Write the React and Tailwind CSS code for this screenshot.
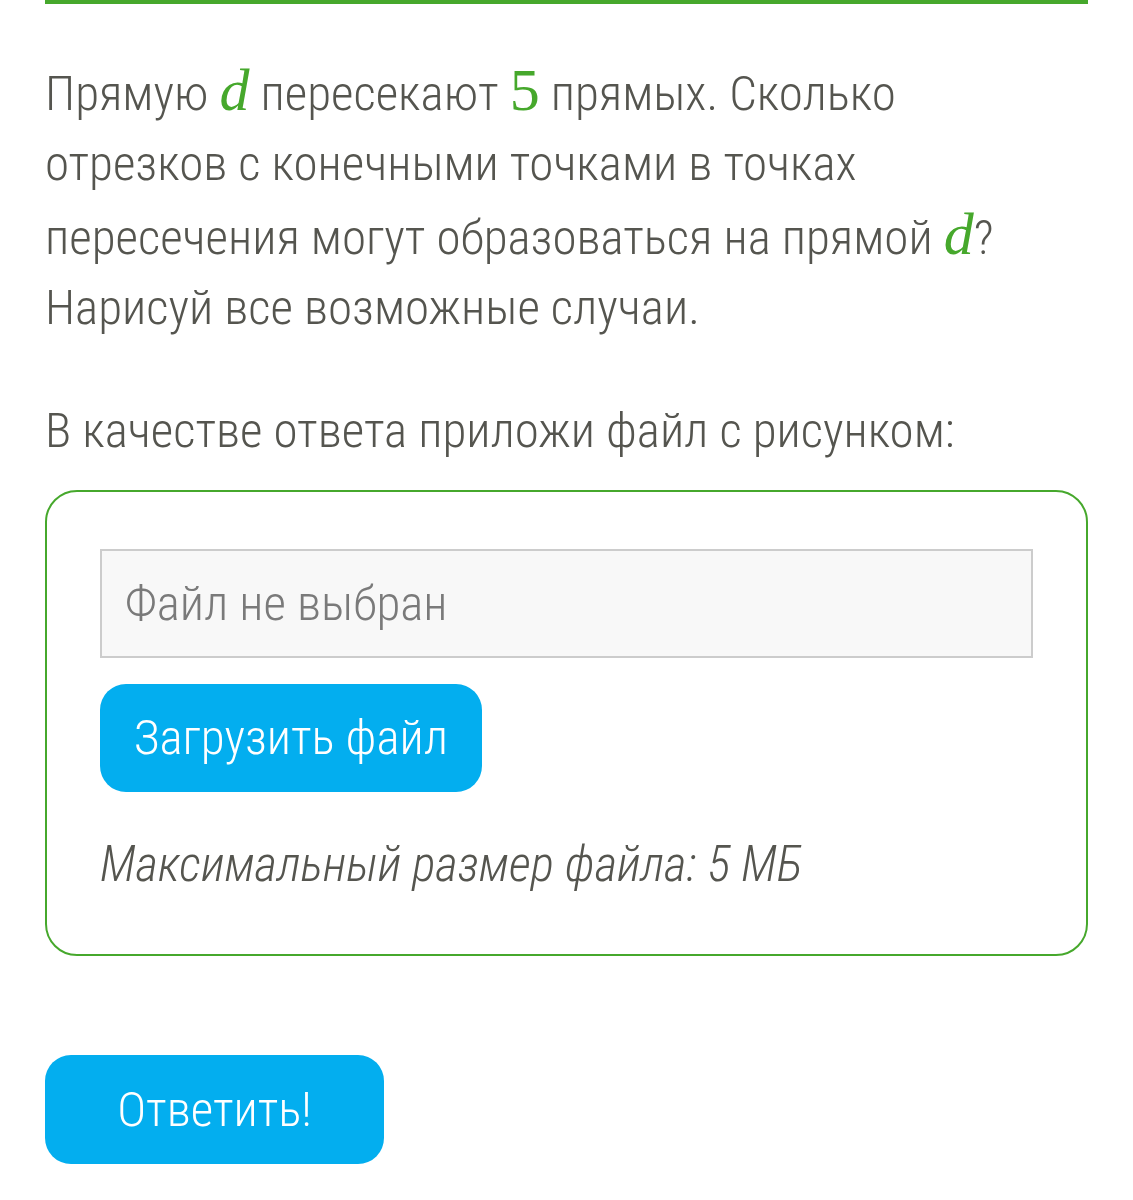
export default function App() {
  const font = { fontFamily: '"Roboto Condensed", Roboto, "Liberation Sans", sans-serif' }
  return (
    <div className="min-h-[1200px] bg-white text-[#55554f]" style={font}>
      <div className="px-[45px]">
        {/* top rule */}
        <div className="h-[4px] bg-[#46a82c]" />

        <p className="mt-[51px] text-[49px] leading-[70px] font-light">
          Прямую <span className="font-['Liberation_Serif',serif] italic text-[60px] text-[#46a82c]">d</span> пересекают{' '}
          <span className="font-['Liberation_Serif',serif] text-[60px] text-[#46a82c]">5</span> прямых. Сколько
          <br />
          отрезков с конечными точками в точках
          <br />
          пересечения могут образоваться на прямой{' '}
          <span className="font-['Liberation_Serif',serif] italic text-[60px] text-[#46a82c]">d</span>?
          <br />
          Нарисуй все возможные случаи.
        </p>

        <p className="mt-[53px] text-[49px] leading-[70px] font-light">В качестве ответа приложи файл с рисунком:</p>

        {/* upload box */}
        <div className="mt-[24px] rounded-[32px] border-2 border-[#46a82c] px-[53px] pt-[57px] pb-[59px]">
          <div className="h-[109px] border-2 border-[#cccccc] bg-[#f8f8f8] flex items-center px-[23px]">
            <span className="text-[49px] font-light text-[#7a7a7a]">Файл не выбран</span>
          </div>
          <button className="mt-[26px] h-[108px] w-[382px] rounded-[26px] bg-[#03aeef] text-white text-[49px] font-light">
            Загрузить файл
          </button>
          <p className="mt-[43px] text-[49px] leading-[60px] font-light italic">Максимальный размер файла: 5 МБ</p>
        </div>

        <button className="mt-[99px] h-[109px] w-[339px] rounded-[26px] bg-[#03aeef] text-white text-[49px] font-light">
          Ответить!
        </button>
      </div>
    </div>
  )
}
